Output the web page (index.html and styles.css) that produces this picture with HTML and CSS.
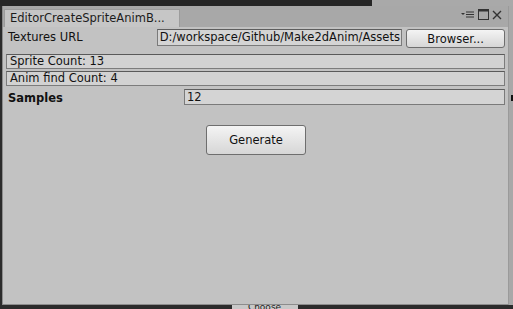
FILE: index.html
```html
<!DOCTYPE html>
<html>
<head>
<meta charset="utf-8">
<link rel="stylesheet" href="styles.css">
</head>
<body>
<div class="desk">
  <div class="topstrip">
    <div class="strip-dark"></div>
    <div class="strip-light"></div>
  </div>
  <div class="middle">
    <div class="window">
      <div class="tabbar">
        <div class="tab">EditorCreateSpriteAnimB...</div>
        <div class="tabicons">
          <svg width="14" height="9" viewBox="0 0 14 9"><path d="M0 3h4L2 5z" fill="#333"/><path d="M5 2h8M5 4.5h8M5 7h8" stroke="#333" stroke-width="1.2"/></svg>
          <svg width="11" height="11" viewBox="0 0 11 11"><rect x="0.5" y="0.5" width="10" height="10" fill="none" stroke="#333"/><rect x="0.5" y="0.5" width="10" height="2" fill="#333"/></svg>
          <svg width="10" height="10" viewBox="0 0 10 10"><path d="M1 1L9 9M9 1L1 9" stroke="#333" stroke-width="1.4"/></svg>
        </div>
      </div>
      <div class="content">
        <div class="row url-row">
          <div class="label">Textures URL</div>
          <div class="field url-field">D:/workspace/Github/Make2dAnim/Assets</div>
          <div class="button browse">Browser...</div>
        </div>
        <div class="infobox first">Sprite Count: 13</div>
        <div class="infobox">Anim find Count: 4</div>
        <div class="row samples-row">
          <div class="label bold">Samples</div>
          <div class="field samples-field">12</div>
        </div>
        <div class="gen-wrap">
          <div class="button generate">Generate</div>
        </div>
      </div>
    </div>
    <div class="rightside"><div class="mark"></div></div>
  </div>
  <div class="bottomstrip">
    <div class="choose">Choose</div>
  </div>
</div>
</body>
</html>
```
FILE: styles.css
```css
html, body {
  margin: 0;
  padding: 0;
}
body {
  width: 513px;
  height: 309px;
  overflow: hidden;
  font-family: "DejaVu Sans", Verdana, sans-serif;
  font-size: 11.5px;
  color: #111;
}
.desk {
  width: 513px;
  height: 309px;
  background: #2b2b2b;
  display: flex;
  flex-direction: column;
}
.topstrip {
  height: 6px;
  display: flex;
}
.strip-dark {
  width: 372px;
  background: #262626;
}
.strip-light {
  flex: 1;
  background: #a9a9a9;
}
.middle {
  flex: 1;
  display: flex;
}
.window {
  margin-left: 2px;
  width: 505px;
  background: #c2c2c2;
  border-left: 1px solid #8c8c8c;
  border-right: 1px solid #9a9a9a;
  border-bottom: 1px solid #8c8c8c;
  display: flex;
  flex-direction: column;
}
.tabbar {
  height: 21px;
  background: #a8a8a8;
  display: flex;
  align-items: flex-end;
  justify-content: space-between;
}
.tab {
  width: 176px;
  height: 18px;
  margin-left: 1px;
  background: #c6c6c6;
  border: 1px solid #9c9c9c;
  border-bottom: none;
  box-sizing: border-box;
  padding: 1px 0 0 5px;
  color: #1c1c1c;
  white-space: nowrap;
  overflow: hidden;
}
.tabicons {
  align-self: center;
  display: flex;
  align-items: center;
  gap: 3px;
  margin-right: 6px;
  margin-top: -4px;
}
.content {
  padding: 0 3px 0 2px;
  display: flex;
  flex-direction: column;
}
.row {
  display: flex;
  align-items: center;
}
.label {
  padding-left: 3px;
  color: #111;
}
.bold { font-weight: bold; }
.url-row {
  height: 20px;
}
.url-row .label {
  width: 148px;
}
.field {
  background: #d4d4d4;
  border: 1px solid #7a7a7a;
  border-top-color: #5e5e5e;
  box-sizing: border-box;
  height: 17px;
  padding: 0 0 0 2px;
  line-height: 15px;
  white-space: nowrap;
  overflow: hidden;
}
.url-field {
  width: 246px;
  margin-left: 1px;
}
.button {
  box-sizing: border-box;
  border: 1px solid #6e6e6e;
  border-radius: 3px;
  background: linear-gradient(#f4f4f4, #d6d6d6);
  display: flex;
  align-items: center;
  justify-content: center;
  color: #111;
}
.browse {
  width: 99px;
  height: 19px;
  margin-left: 4px;
  margin-top: 3px;
}
.infobox {
  height: 15px;
  box-sizing: border-box;
  background: #d2d2d2;
  border: 1px solid #7c7c7c;
  border-top-color: #5a5a5a;
  margin-top: 2px;
  padding-left: 3px;
  line-height: 13px;
  margin-left: 1px;
}
.infobox.first {
  margin-top: 7px;
}
.samples-row {
  margin-top: 2px;
  height: 17px;
}
.samples-row .label {
  width: 176px;
  padding-top: 3px;
}
.samples-field {
  flex: 1;
  height: 16px;
}
.gen-wrap {
  display: flex;
  justify-content: center;
  padding-top: 20px;
}
.generate {
  width: 100px;
  height: 30px;
  margin-left: 2px;
}
.rightside {
  flex: 1;
  background: #a8a8a8;
  position: relative;
}
.mark {
  position: absolute;
  left: 2px;
  top: 89px;
  width: 3px;
  height: 6px;
  background: #111;
}
.bottomstrip {
  height: 4px;
  background: #2b2b2b;
  display: flex;
  justify-content: center;
  overflow: hidden;
}
.choose {
  width: 66px;
  height: 4px;
  background: #c8c8c8;
  color: #222;
  font-size: 9px;
  line-height: 4px;
  text-align: center;
  margin-left: 16px;
  overflow: hidden;
}
```
